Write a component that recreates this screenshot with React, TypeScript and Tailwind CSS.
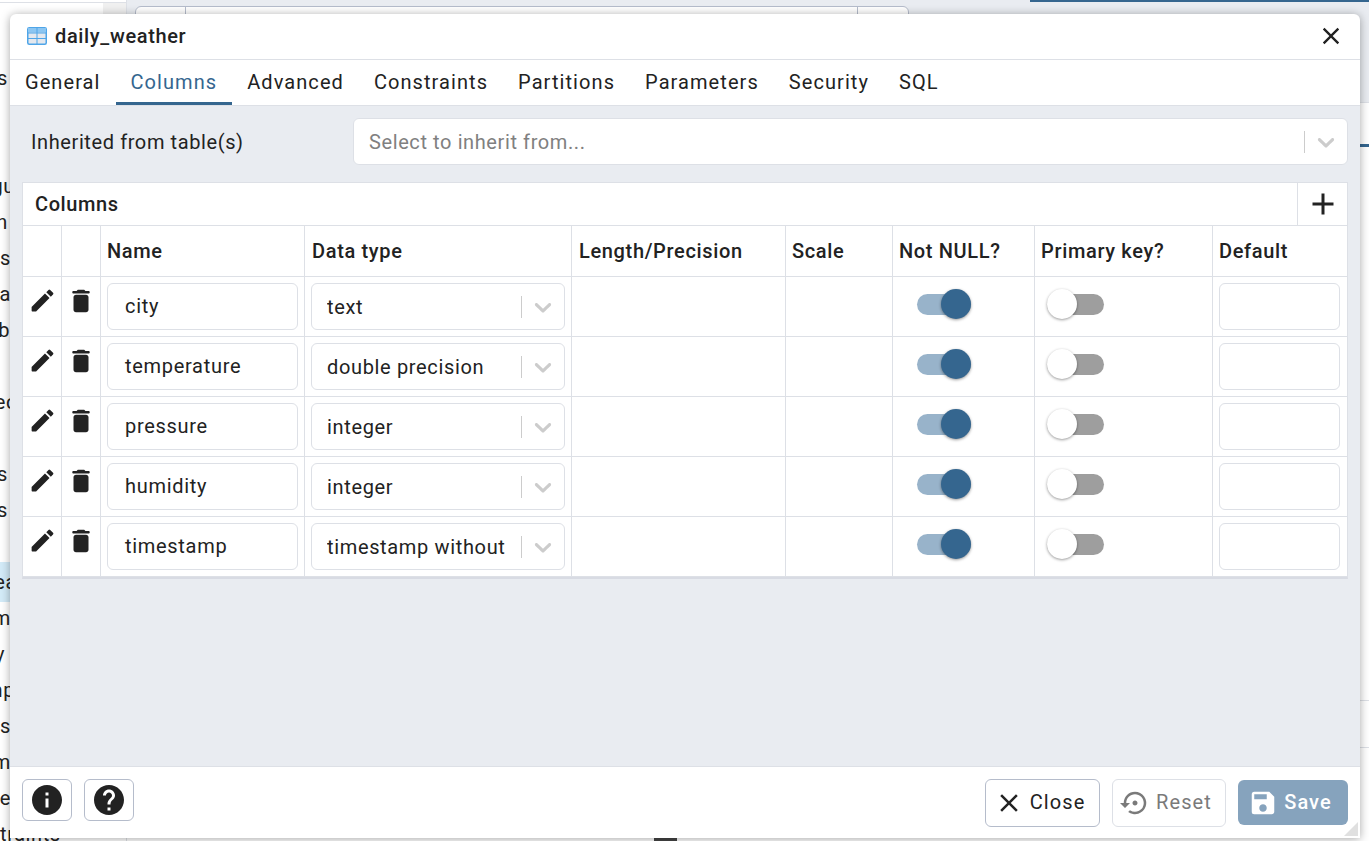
import { MdAdd, MdClose, MdHelp, MdInfo, MdSave, MdSettingsBackupRestore } from 'react-icons/md';

const tabs = ['General', 'Columns', 'Advanced', 'Constraints', 'Partitions', 'Parameters', 'Security', 'SQL'];

const columns = [
  { name: 'city', type: 'text' },
  { name: 'temperature', type: 'double precision' },
  { name: 'pressure', type: 'integer' },
  { name: 'humidity', type: 'integer' },
  { name: 'timestamp', type: 'timestamp without' },
];

// what is left visible of the tree behind the dialog, right edge set per row
const treeRows = [
  { t: 's', w: 'w-[8px]' },
  { t: '', w: 'w-[8px]' },
  { t: '', w: 'w-[8px]' },
  { t: 'gu', w: 'w-[15px]' },
  { t: 'n', w: 'w-[8px]' },
  { t: 'rs', w: 'w-[11px]' },
  { t: 'a', w: 'w-[11px]' },
  { t: 'b', w: 'w-[10px]' },
  { t: '', w: 'w-[8px]' },
  { t: 'ec', w: 'w-[17px]' },
  { t: '', w: 'w-[8px]' },
  { t: 's', w: 'w-[8px]' },
  { t: 's', w: 'w-[8px]' },
  { t: '', w: 'w-[8px]' },
  { t: 'ea', w: 'w-[17px]' },
  { t: 'm', w: 'w-[11px]' },
  { t: 'y', w: 'w-[5px]' },
  { t: 'np', w: 'w-[15px]' },
  { t: 's', w: 'w-[11px]' },
  { t: 'm', w: 'w-[11px]' },
  { t: 'e', w: 'w-[11px]' },
];

const gridCols = 'grid grid-cols-[39px_39px_204px_267px_214px_107px_142px_178px_134px]';

function Chevron() {
  return (
    <svg viewBox="0 0 20 20" className="h-[28px] w-[28px] fill-[#cccccc]">
      <path d="M4.516 7.548c0.436-0.446 1.043-0.481 1.576 0l3.908 3.747 3.908-3.747c0.533-0.481 1.141-0.446 1.574 0 0.436 0.445 0.408 1.197 0 1.615-0.406 0.418-4.695 4.502-4.695 4.502-0.217 0.223-0.502 0.335-0.787 0.335s-0.57-0.112-0.789-0.335c0 0-4.287-4.084-4.695-4.502s-0.436-1.17 0-1.615z" />
    </svg>
  );
}

function PencilIcon() {
  return (
    <svg viewBox="0 0 24 24" className="h-[29px] w-[29px] fill-[#222222]">
      <path d="M3 17.46v3.04c0 .28.22.5.5.5h3.04c.13 0 .26-.05.35-.15L17.81 9.94l-3.75-3.75L3.15 17.1c-.1.1-.15.22-.15.36zM20.71 7.04a.996.996 0 0 0 0-1.41l-2.34-2.34a.996.996 0 0 0-1.41 0l-1.83 1.83 3.75 3.75 1.83-1.83z" />
    </svg>
  );
}

function TrashIcon() {
  return (
    <svg viewBox="0 0 24 24" className="h-[30px] w-[30px] fill-[#222222]">
      <path d="M6 19c0 1.1.9 2 2 2h8c1.1 0 2-.9 2-2V9c0-1.1-.9-2-2-2H8c-1.1 0-2 .9-2 2v10zM18 4h-2.5l-.71-.71c-.18-.18-.44-.29-.7-.29H9.91c-.26 0-.52.11-.7.29L8.5 4H6c-.55 0-1 .45-1 1s.45 1 1 1h12c.55 0 1-.45 1-1s-.45-1-1-1z" />
    </svg>
  );
}

function TableIcon() {
  return (
    <svg viewBox="0 0 20 18" className="mb-[1px] h-[18px] w-[20px]">
      <rect x="0.75" y="0.75" width="18.5" height="16.5" rx="1.5" fill="#e4e8ee" stroke="#4ea5e8" strokeWidth="1.5" />
      <rect x="1" y="1" width="18" height="4.5" fill="#8cc6f2" />
      <path d="M1 6h18M1 11.5h18M10 1v16" stroke="#4ea5e8" strokeWidth="1" fill="none" />
    </svg>
  );
}

function Switch({ on }: { on: boolean }) {
  return (
    <div className={`relative h-[21px] rounded-full ${on ? 'w-[54px] bg-[#98b3ca]' : 'w-[57px] bg-[#9e9e9e]'}`}>
      <div
        className={`absolute top-[-5px] h-[30px] w-[30px] rounded-full shadow-[0_1px_3px_rgba(0,0,0,0.4)] ${
          on ? 'right-0 bg-[#35668f]' : 'left-0 bg-white'
        }`}
      />
    </div>
  );
}

function ColumnRow({ name, type }: { name: string; type: string }) {
  return (
    <div className={`${gridCols} h-[60px] border-b border-[#dde0e6]`}>
      <div className="flex justify-center border-r border-[#dde0e6] pl-[1px] pt-[9px]">
        <PencilIcon />
      </div>
      <div className="flex justify-center border-r border-[#dde0e6] pt-[9px]">
        <TrashIcon />
      </div>
      <div className="border-r border-[#dde0e6] px-[6px] pt-[6px]">
        <div className="flex h-[47px] w-[191px] items-center rounded-[6px] border border-[#dde0e6] pb-[2px] pl-[17px] tracking-[0.7px]">
          {name}
        </div>
      </div>
      <div className="border-r border-[#dde0e6] px-[6px] pt-[6px]">
        <div className="flex h-[47px] w-[254px] items-center rounded-[6px] border border-[#dde0e6] pl-[15px]">
          <span className="w-[194px] overflow-hidden whitespace-nowrap tracking-[0.65px]">{type}</span>
          <div className="h-[22px] w-px bg-[#cccccc]" />
          <div className="ml-[7px]">
            <Chevron />
          </div>
        </div>
      </div>
      <div className="border-r border-[#dde0e6]" />
      <div className="border-r border-[#dde0e6]" />
      <div className="border-r border-[#dde0e6] pl-[24px] pt-[17px]">
        <Switch on />
      </div>
      <div className="border-r border-[#dde0e6] pl-[12px] pt-[17px]">
        <Switch on={false} />
      </div>
      <div className="px-[6px] pt-[6px]">
        <div className="h-[47px] w-[121px] rounded-[6px] border border-[#dde0e6]" />
      </div>
    </div>
  );
}

export default function App() {
  return (
    <div className="relative flex h-[841px] w-[1369px] overflow-hidden bg-white font-['Roboto',sans-serif] text-[20px] tracking-[0.6px] text-[#222222]">
      {/* page behind the dialog */}
      <div className="w-[127px] shrink-0 border-r border-[#dde0e6]">
        <div className="flex h-[60px] flex-col">
          <div className="mt-[2px] flex h-[12px] border-t border-[#dde0e6]">
            <div className="flex-1" />
            <div className="w-[23px] bg-[#f0f0f0]" />
          </div>
        </div>
        {treeRows.map((r, i) => (
          <div
            key={i}
            className={
              r.t === 'ea'
                ? 'my-[-2px] h-[40px] bg-[#d3ebf8]'
                : 'h-[36px]'
            }
          >
            <div className={`flex h-full items-center justify-end whitespace-nowrap ${r.w}`}>{r.t}</div>
          </div>
        ))}
        <div className="flex h-[36px] items-center whitespace-nowrap">traints</div>
      </div>
      <div className="flex flex-1 flex-col">
        <div className="flex h-[14px] bg-[#e9ecf1]">
          <div className="ml-[8px] mt-[6px] flex h-[20px] w-[774px] rounded-t-[6px] border border-[#b5bccb] bg-white">
            <div className="w-[50px] border-r border-[#b5bccb]" />
            <div className="flex-1 border-r border-[#b5bccb]" />
            <div className="w-[50px]" />
          </div>
          <div className="ml-[121px] h-[2px] flex-1 bg-[#35668f]" />
        </div>
        <div className="h-[91px] border-b border-[#dde0e6] bg-[#e9ecf1]" />
        <div className="flex h-[45px] items-end justify-end">
          <div className="h-[3px] w-[9px] bg-[#35668f]" />
        </div>
        <div className="h-[567px] border-b border-[#dde0e6]" />
        <div className="h-[48px] border-b border-[#dde0e6]" />
        <div className="flex items-start pl-[527px] pt-[63px] text-[18px]">
          <div className="mr-[13px] mt-[10px] h-[20px] w-[23px] bg-[#444444]" />
          No data output. Execute a query to get output.
        </div>
      </div>

      {/* dialog */}
      <div className="absolute left-[10px] top-[14px] flex h-[824px] w-[1350px] flex-col overflow-hidden rounded-t-[6px] bg-white shadow-[0_1px_10px_rgba(0,0,0,0.35)]">
        <div className="flex h-[46px] shrink-0 items-center border-b border-[#dde0e6] pl-[17px] pr-[15px]">
          <TableIcon />
          <span className="mb-[2px] ml-[8px] font-medium tracking-[0.65px]">daily_weather</span>
          <MdClose className="mb-[1px] ml-auto text-[28px]" />
        </div>
        <div className="flex h-[46px] shrink-0 border-b border-[#dde0e6] tracking-[1.07px]">
          {tabs.map((t) => (
            <div
              key={t}
              className={`flex h-[45px] items-center px-[15px] ${
                t === 'Columns' ? 'border-b-[3px] border-[#35668f] pt-[1px] text-[#35668f]' : 'pb-[2px]'
              }`}
            >
              {t}
            </div>
          ))}
        </div>

        <div className="flex flex-1 flex-col bg-[#e9ecf1] px-[12px] pt-[12px]">
          <div className="flex h-[47px] items-center">
            <div className="w-[331px] pl-[9px]">Inherited from table(s)</div>
            <div className="flex h-[47px] w-[995px] items-center rounded-[6px] border border-[#dde0e6] bg-white pl-[15px] text-[#808080]">
              <span className="flex-1">Select to inherit from...</span>
              <div className="h-[22px] w-px bg-[#cccccc]" />
              <div className="ml-[7px] mr-[7px]">
                <Chevron />
              </div>
            </div>
          </div>

          <div className="mt-[17px] w-[1326px] border-x border-t border-b-2 border-[#dde0e6] border-b-[#d8dbe3] bg-white">
            <div className="flex h-[43px] items-center border-b border-[#dde0e6]">
              <span className="flex-1 pl-[12px] font-medium tracking-[0.6px]">Columns</span>
              <div className="flex h-full w-[50px] items-center justify-center border-l border-[#dde0e6]">
                <MdAdd className="text-[36px]" />
              </div>
            </div>
            <div className={`${gridCols} h-[51px] border-b border-[#dde0e6] font-medium tracking-[0.65px]`}>
              <div className="border-r border-[#dde0e6]" />
              <div className="border-r border-[#dde0e6]" />
              <div className="flex items-center border-r border-[#dde0e6] pl-[6px]">Name</div>
              <div className="flex items-center border-r border-[#dde0e6] pl-[7px]">Data type</div>
              <div className="flex items-center border-r border-[#dde0e6] pl-[7px]">Length/Precision</div>
              <div className="flex items-center border-r border-[#dde0e6] pl-[6px]">Scale</div>
              <div className="flex items-center border-r border-[#dde0e6] pl-[6px]">Not NULL?</div>
              <div className="flex items-center border-r border-[#dde0e6] pl-[6px]">Primary key?</div>
              <div className="flex items-center pl-[6px]">Default</div>
            </div>
            {columns.map((c) => (
              <ColumnRow key={c.name} name={c.name} type={c.type} />
            ))}
          </div>
        </div>

        <div className="relative flex h-[72px] shrink-0 items-start border-t border-[#dde0e6] pl-[12px] pr-[12px] pt-[12px]">
          <div className="flex h-[42px] w-[50px] items-center justify-center rounded-[6px] border border-[#b5bccb]">
            <MdInfo className="text-[36px]" />
          </div>
          <div className="ml-[12px] flex h-[42px] w-[50px] items-center justify-center rounded-[6px] border border-[#b5bccb]">
            <MdHelp className="text-[36px]" />
          </div>
          <div className="ml-auto flex h-[48px] w-[115px] items-center justify-center gap-[6px] rounded-[6px] border border-[#b5bccb] pr-[6px] tracking-[1.1px]">
            <MdClose className="text-[30px]" />
            <span className="mb-[2px]">Close</span>
          </div>
          <div className="ml-[12px] flex h-[48px] w-[114px] items-center justify-center gap-[6px] rounded-[6px] border border-[#dde0e6] pr-[6px] tracking-[1.1px] text-[#7a7a7a]">
            <MdSettingsBackupRestore className="text-[30px]" />
            <span className="mb-[2px]">Reset</span>
          </div>
          <div className="ml-[12px] mt-[1px] flex h-[45px] w-[110px] items-center justify-center gap-[6px] rounded-[6px] bg-[#86a3bd] pr-[6px] font-medium tracking-[1px] text-white">
            <MdSave className="text-[30px]" />
            <span className="mb-[2px]">Save</span>
          </div>
          <svg viewBox="0 0 14 14" className="absolute bottom-[2px] right-[2px] h-[14px] w-[14px] fill-[#e0e0e0]">
            <path d="M14 0V14H0Z" />
          </svg>
        </div>
      </div>
    </div>
  );
}
